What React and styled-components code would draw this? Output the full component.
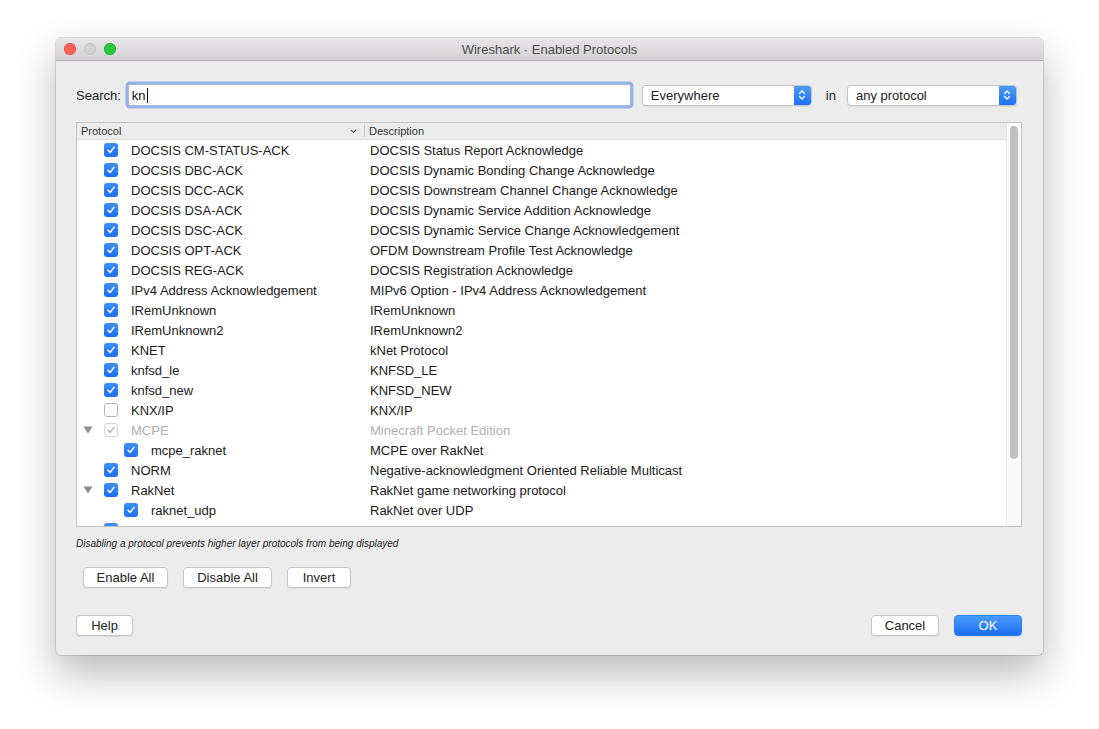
import styled, { createGlobalStyle } from "styled-components";

const GlobalStyle = createGlobalStyle`
  html, body {
    margin: 0;
    padding: 0;
    background: #ffffff;
  }
  body {
    font-family: "Liberation Sans", "Noto Sans", Arial, sans-serif;
    font-size: 13px;
    color: #222;
  }
`;

const rows = [
  { name: "DOCSIS CM-STATUS-ACK", desc: "DOCSIS Status Report Acknowledge", checked: true },
  { name: "DOCSIS DBC-ACK", desc: "DOCSIS Dynamic Bonding Change Acknowledge", checked: true },
  { name: "DOCSIS DCC-ACK", desc: "DOCSIS Downstream Channel Change Acknowledge", checked: true },
  { name: "DOCSIS DSA-ACK", desc: "DOCSIS Dynamic Service Addition Acknowledge", checked: true },
  { name: "DOCSIS DSC-ACK", desc: "DOCSIS Dynamic Service Change Acknowledgement", checked: true },
  { name: "DOCSIS OPT-ACK", desc: "OFDM Downstream Profile Test Acknowledge", checked: true },
  { name: "DOCSIS REG-ACK", desc: "DOCSIS Registration Acknowledge", checked: true },
  { name: "IPv4 Address Acknowledgement", desc: "MIPv6 Option - IPv4 Address Acknowledgement", checked: true },
  { name: "IRemUnknown", desc: "IRemUnknown", checked: true },
  { name: "IRemUnknown2", desc: "IRemUnknown2", checked: true },
  { name: "KNET", desc: "kNet Protocol", checked: true },
  { name: "knfsd_le", desc: "KNFSD_LE", checked: true },
  { name: "knfsd_new", desc: "KNFSD_NEW", checked: true },
  { name: "KNX/IP", desc: "KNX/IP", checked: false },
  { name: "MCPE", desc: "Minecraft Pocket Edition", checked: true, disabled: true, parent: true },
  { name: "mcpe_raknet", desc: "MCPE over RakNet", checked: true, child: true },
  { name: "NORM", desc: "Negative-acknowledgment Oriented Reliable Multicast", checked: true },
  { name: "RakNet", desc: "RakNet game networking protocol", checked: true, parent: true },
  { name: "raknet_udp", desc: "RakNet over UDP", checked: true, child: true },
  { name: "Selective Negative Acknowledgement", desc: "TCP Option - Selective Negative Acknowledgements", checked: true },
];

function Check({ checked, disabled }) {
  return (
    <CheckBox $checked={checked} $disabled={disabled}>
      {checked && (
        <svg width="10" height="10" viewBox="0 0 10 10">
          <path
            d="M2 5.2 L4.2 7.4 L8 2.4"
            fill="none"
            stroke={disabled ? "#b5b5b5" : "#ffffff"}
            strokeWidth="1.5"
            strokeLinecap="round"
            strokeLinejoin="round"
          />
        </svg>
      )}
    </CheckBox>
  );
}

function UpDown() {
  return (
    <SelectArrow>
      <svg width="8" height="12" viewBox="0 0 8 12">
        <path d="M1.5 4.5 L4 2 L6.5 4.5 M1.5 7.5 L4 10 L6.5 7.5" fill="none" stroke="#fff" strokeWidth="1.3" strokeLinecap="round" strokeLinejoin="round" />
      </svg>
    </SelectArrow>
  );
}

export default function App() {
  return (
    <Page>
      <GlobalStyle />
      <Window>
        <TitleBar>
          <Lights>
            <Light $color="#fe5f57" $border="#e0443e" />
            <Light $color="#d0d0d0" $border="#bcbcbc" />
            <Light $color="#28c840" $border="#1aab29" />
          </Lights>
          <Title>Wireshark · Enabled Protocols</Title>
        </TitleBar>
        <Body>
          <SearchRow>
            <Label>Search:</Label>
            <SearchInput>
              kn<Caret />
            </SearchInput>
            <Select $width={170}>
              <span>Everywhere</span>
              <UpDown />
            </Select>
            <InLabel>in</InLabel>
            <Select $width={170}>
              <span>any protocol</span>
              <UpDown />
            </Select>
          </SearchRow>

          <Table>
            <TableMain>
              <Header>
                <HeadCell $width={288}>
                  Protocol
                  <SortChevron>
                    <svg width="7" height="5" viewBox="0 0 7 5">
                      <path d="M1 1 L3.5 3.5 L6 1" fill="none" stroke="#555" strokeWidth="1.1" />
                    </svg>
                  </SortChevron>
                </HeadCell>
                <HeadCell>Description</HeadCell>
              </Header>
              <Rows>
                {rows.map((r) => (
                  <Row key={r.name}>
                    <NameCell $child={r.child}>
                      <Disclosure>
                        {r.parent && (
                          <svg width="10" height="8" viewBox="0 0 10 8">
                            <path d="M0.5 0.5 H9.5 L5 7.5 Z" fill="#8c8c8c" />
                          </svg>
                        )}
                      </Disclosure>
                      <Check checked={r.checked} disabled={r.disabled} />
                      <CellText $disabled={r.disabled}>{r.name}</CellText>
                    </NameCell>
                    <DescCell $disabled={r.disabled}>{r.desc}</DescCell>
                  </Row>
                ))}
              </Rows>
            </TableMain>
            <ScrollTrack>
              <ScrollThumb />
            </ScrollTrack>
          </Table>

          <Note>Disabling a protocol prevents higher layer protocols from being displayed</Note>

          <ButtonRow>
            <Button $width={85}>Enable All</Button>
            <Button $width={89}>Disable All</Button>
            <Button $width={64}>Invert</Button>
          </ButtonRow>

          <Footer>
            <Button $width={57}>Help</Button>
            <FooterRight>
              <Button $width={68}>Cancel</Button>
              <Button $width={68} $primary>OK</Button>
            </FooterRight>
          </Footer>
        </Body>
      </Window>
    </Page>
  );
}

const Page = styled.div`
  width: 1099px;
  height: 729px;
  padding: 38px 0 0 56px;
  box-sizing: border-box;
  background: #ffffff;
`;

const Window = styled.div`
  width: 987px;
  height: 617px;
  background: #ececec;
  border-radius: 5px;
  box-shadow: 0 0 0 1px rgba(0, 0, 0, 0.12), 0 18px 40px rgba(0, 0, 0, 0.28);
  overflow: hidden;
  display: flex;
  flex-direction: column;
`;

const TitleBar = styled.div`
  height: 22px;
  flex-shrink: 0;
  background: linear-gradient(#e8e6e8, #d3d1d3);
  border-bottom: 1px solid #b4b4b4;
  display: flex;
  align-items: center;
  position: relative;
`;

const Lights = styled.div`
  display: flex;
  gap: 8px;
  padding-left: 8px;
`;

const Light = styled.div`
  width: 12px;
  height: 12px;
  border-radius: 50%;
  background: ${(p) => p.$color};
  box-shadow: inset 0 0 0 0.5px ${(p) => p.$border};
`;

const Title = styled.div`
  position: absolute;
  left: 0;
  right: 0;
  text-align: center;
  font-size: 13px;
  color: #4d4d4d;
`;

const Body = styled.div`
  flex: 1;
  display: flex;
  flex-direction: column;
  padding: 22px 21px 19px 20px;
`;

const SearchRow = styled.div`
  display: flex;
  align-items: center;
  height: 24px;
  margin-bottom: 15px;
`;

const Label = styled.span`
  font-size: 13px;
  color: #222;
  margin-right: 6px;
`;

const SearchInput = styled.div`
  width: 498px;
  height: 20px;
  background: #fff;
  border: 1px solid #a9b8d8;
  box-shadow: 0 0 0 2.5px #94b1e8;
  border-radius: 2px;
  display: flex;
  align-items: center;
  padding-left: 3px;
  font-size: 13px;
  color: #111;
  margin-left: 1px;
`;

const Caret = styled.span`
  display: inline-block;
  width: 1px;
  height: 15px;
  background: #111;
  margin-left: 1px;
`;

const Select = styled.div`
  width: ${(p) => p.$width}px;
  height: 21px;
  box-sizing: border-box;
  margin-left: 11px;
  background: #fff;
  border: 1px solid #c4c4c4;
  border-radius: 4px;
  display: flex;
  align-items: center;
  justify-content: space-between;
  padding-left: 8px;
  font-size: 13px;
  color: #222;
  overflow: hidden;
  box-shadow: 0 1px 1px rgba(0, 0, 0, 0.06);
`;

const SelectArrow = styled.div`
  width: 17px;
  height: 21px;
  background: linear-gradient(#4d9cfb, #1b70f2);
  display: flex;
  align-items: center;
  justify-content: center;
`;

const InLabel = styled.span`
  margin-left: 14px;
  margin-right: 0;
  font-size: 13px;
  color: #222;
`;

const Table = styled.div`
  height: 405px;
  box-sizing: border-box;
  border: 1px solid #c3c3c3;
  background: #fff;
  display: flex;
  overflow: hidden;
`;

const TableMain = styled.div`
  flex: 1;
  display: flex;
  flex-direction: column;
  overflow: hidden;
`;

const Header = styled.div`
  height: 16px;
  flex-shrink: 0;
  display: flex;
  background: #ececec;
  border-bottom: 1px solid #e0e0e0;
`;

const HeadCell = styled.div`
  ${(p) => (p.$width ? `width: ${p.$width}px;` : "flex: 1;")}
  box-sizing: border-box;
  padding-left: 4px;
  font-size: 11px;
  color: #333;
  display: flex;
  align-items: center;
  position: relative;
  border-right: ${(p) => (p.$width ? "1px solid #c8c8c8" : "none")};
  margin: 2px 0;
`;

const SortChevron = styled.span`
  position: absolute;
  right: 7px;
  top: 4px;
  display: flex;
`;

const Rows = styled.div`
  display: flex;
  flex-direction: column;
`;

const Row = styled.div`
  height: 20px;
  flex-shrink: 0;
  display: flex;
  align-items: center;
`;

const NameCell = styled.div`
  width: 289px;
  display: flex;
  align-items: center;
  padding-left: ${(p) => (p.$child ? 20 : 0)}px;
  box-sizing: border-box;
  white-space: nowrap;
  overflow: hidden;
`;

const Disclosure = styled.span`
  width: 27px;
  padding-left: 6px;
  box-sizing: border-box;
  display: flex;
  align-items: center;
`;

const CheckBox = styled.span`
  width: 14px;
  height: 14px;
  box-sizing: border-box;
  border-radius: 3px;
  display: flex;
  align-items: center;
  justify-content: center;
  flex-shrink: 0;
  background: ${(p) =>
    p.$disabled ? "#fff" : p.$checked ? "linear-gradient(#3d8ffb, #1e6ff1)" : "#fff"};
  border: ${(p) =>
    p.$disabled ? "1px solid #d4d4d4" : p.$checked ? "none" : "1px solid #b5b5b5"};
`;

const CellText = styled.span`
  margin-left: 13px;
  font-size: 13px;
  color: ${(p) => (p.$disabled ? "#b0b0b0" : "#1a1a1a")};
`;

const DescCell = styled.div`
  flex: 1;
  padding-left: 4px;
  font-size: 13px;
  white-space: nowrap;
  overflow: hidden;
  color: ${(p) => (p.$disabled ? "#b0b0b0" : "#1a1a1a")};
`;

const ScrollTrack = styled.div`
  width: 15px;
  flex-shrink: 0;
  background: #fafafa;
  border-left: 1px solid #e8e8e8;
  padding: 3px 0 0 3px;
  box-sizing: border-box;
`;

const ScrollThumb = styled.div`
  width: 8px;
  height: 333px;
  border-radius: 4px;
  background: #c1c1c1;
`;

const Note = styled.div`
  margin-top: 11px;
  font-size: 10px;
  font-style: italic;
  color: #222;
`;

const ButtonRow = styled.div`
  display: flex;
  gap: 15px;
  margin-top: 18px;
  padding-left: 7px;
`;

const Button = styled.div`
  width: ${(p) => p.$width}px;
  height: 21px;
  box-sizing: border-box;
  border-radius: 4px;
  display: flex;
  align-items: center;
  justify-content: center;
  font-size: 13px;
  color: ${(p) => (p.$primary ? "#fff" : "#222")};
  background: ${(p) => (p.$primary ? "linear-gradient(#4b9bfb, #1a6ff2)" : "#fff")};
  border: 1px solid ${(p) => (p.$primary ? "#2a7ef4" : "#c6c6c6")};
  box-shadow: 0 1px 1px rgba(0, 0, 0, 0.08);
`;

const Footer = styled.div`
  display: flex;
  justify-content: space-between;
  margin-top: auto;
`;

const FooterRight = styled.div`
  display: flex;
  gap: 15px;
`;
